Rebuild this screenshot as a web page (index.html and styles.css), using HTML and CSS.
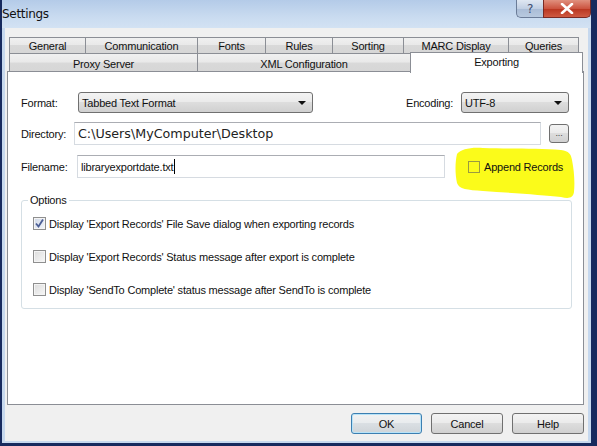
FILE: index.html
```html
<!DOCTYPE html>
<html>
<head>
<meta charset="utf-8">
<link rel="stylesheet" href="styles.css">
</head>
<body>
<div class="window">
  <div class="titlebar">
    <span class="title">Settings</span>
    <div class="caption-btns">
      <div class="cbtn help">?</div>
      <div class="cbtn close">
        <svg width="14" height="11" viewBox="0 0 14 11"><path d="M2 1 L12 10 M12 1 L2 10" stroke="#fff" stroke-width="2.6" stroke-linecap="round"/></svg>
      </div>
    </div>
  </div>
  <div class="client">
    <div class="tabs">
      <div class="tabrow back">
        <div class="tab" style="width:77px">General</div>
        <div class="tab" style="width:113px">Communication</div>
        <div class="tab" style="width:69px">Fonts</div>
        <div class="tab" style="width:68px">Rules</div>
        <div class="tab" style="width:72px">Sorting</div>
        <div class="tab" style="width:106px">MARC Display</div>
        <div class="tab" style="width:71px">Queries</div>
      </div>
      <div class="tabrow front">
        <div class="tab" style="width:189px">Proxy Server</div>
        <div class="tab" style="width:214px">XML Configuration</div>
        <div class="tab selected" style="width:173px">Exporting</div>
      </div>
    </div>
    <div class="panel">
      <svg class="highlight" width="126" height="54" viewBox="0 0 126 54"><path d="M4 8 C8 3 18 1 30 2 C55 3 85 2 108 4 C116 5 118 8 119 14 C121 24 122 36 121 46 C120 52 116 53 108 51 C90 49 60 47 30 45 C14 44 6 43 4 37 C2 28 2 16 4 8 Z" fill="#fbfb1a"/></svg>
      <div class="row row-format">
        <span class="lbl" style="width:57px">Format:</span>
        <div class="select" style="width:235px"><span>Tabbed Text Format</span><i class="arrow"></i></div>
        <span class="lbl enc">Encoding:</span>
        <div class="select" style="width:108px"><span>UTF-8</span><i class="arrow"></i></div>
      </div>
      <div class="row row-dir">
        <span class="lbl" style="width:53px">Directory:</span>
        <div class="input dir" style="width:468px">C:\Users\MyComputer\Desktop</div>
        <div class="btn dots">...</div>
      </div>
      <div class="row row-file">
        <span class="lbl" style="width:56px">Filename:</span>
        <div class="input file" style="width:368px">libraryexportdate.txt<span class="caret"></span></div>
        <label class="check append"><span class="box"></span>Append Records</label>
      </div>
      <fieldset class="options">
        <legend>Options</legend>
        <label class="check"><span class="box checked"><svg width="11" height="11" viewBox="0 0 11 11"><path d="M2 5.5 L4.5 8.5 L9 1.5" fill="none" stroke="#4b5e95" stroke-width="1.8"/></svg></span>Display 'Export Records' File Save dialog when exporting records</label>
        <label class="check"><span class="box"></span>Display 'Export Records' Status message after export is complete</label>
        <label class="check"><span class="box"></span>Display 'SendTo Complete' status message after SendTo is complete</label>
      </fieldset>
    </div>
    <div class="buttons">
      <div class="btn default">OK</div>
      <div class="btn">Cancel</div>
      <div class="btn">Help</div>
    </div>
  </div>
</div>
</body>
</html>
```
FILE: styles.css
```css
* { box-sizing: border-box; }
html, body { margin: 0; padding: 0; background: #172a5e; }
body {
  font-family: "Liberation Sans", Arial, sans-serif;
  font-size: 11px;
  letter-spacing: -0.2px;
  color: #111;
}
.window {
  width: 597px;
  height: 446px;
  background: #c6d8ee;
  border-style: solid;
  border-color: #172a5e;
  border-width: 0 6px 3px 2px;
  display: flex;
  flex-direction: column;
}
.titlebar {
  height: 28px;
  flex: none;
  display: flex;
  align-items: flex-start;
  justify-content: space-between;
  background: linear-gradient(#b4cbe8, #c9dbf0 60%, #d3e2f3);
}
.title {
  font-family: "DejaVu Sans", sans-serif;
  font-size: 12px;
  letter-spacing: -0.3px;
  color: #111;
  margin: 7px 0 0 0;
}
.caption-btns { display: flex; margin-right: 0; }
.cbtn {
  height: 18px;
  display: flex;
  align-items: center;
  justify-content: center;
  border: 1px solid #6b7c98;
  border-top: none;
}
.help {
  width: 27px;
  border-radius: 0 0 0 5px;
  border-right: none;
  background: linear-gradient(#dfe7f2, #c1cfe3 50%, #a9bcd6 51%, #b8c9df);
  font-family: "DejaVu Sans", sans-serif;
  font-size: 12px;
  color: #3c4d6e;
}
.close {
  width: 48px;
  border-radius: 0 0 5px 0;
  border-color: #7a2a24;
  background: linear-gradient(#e0907e, #cc5440 50%, #b8341f 51%, #cf5a42);
}
.client {
  flex: 1;
  margin: 0 3px 2px 3px;
  background: #f0f0f0;
  display: flex;
  flex-direction: column;
  padding: 9px 0 0 0;
}
.tabs { margin-left: 4px; }
.tabrow { display: flex; }
.tab {
  height: 17px;
  border: 1px solid #8b8e95;
  border-bottom: none;
  margin-right: -1px;
  background: linear-gradient(#f0f0f0, #e9e9e9 45%, #d9d9d9 50%, #d6d6d6);
  display: flex;
  align-items: center;
  justify-content: center;
  padding-top: 1px;
}
.back .tab { height: 16px; }
.front { height: 18px; }
.front .tab { height: 19px; }
.tab.selected {
  position: relative;
  z-index: 2;
  margin-top: -1px;
  height: 21px;
  background: #fff;
  align-items: flex-start;
  padding-top: 3px;
  border-color: #8b8e95;
}
.panel {
  position: relative;
  margin-left: 2px;
  width: 577px;
  height: 334px;
  background: #fff;
  border: 1px solid #8b8e95;
  padding: 20px 14px 0 13px;
}
.highlight { position: absolute; left: 445px; top: 74px; }
.row { display: flex; align-items: center; position: relative; }
.row-format { height: 21px; }
.row-dir { height: 23px; margin-top: 9px; }
.row-file { height: 23px; margin-top: 10px; }
.lbl { flex: none; }
.enc { margin-left: auto; width: 55px; }
.select {
  height: 21px;
  border: 1px solid #707070;
  border-radius: 3px;
  background: linear-gradient(#f3f3f3, #ebebeb 45%, #dddddd 50%, #d0d0d0);
  display: flex;
  align-items: center;
  padding-left: 3px;
}
.select span { flex: 1; }
.arrow {
  width: 0; height: 0;
  border-left: 4px solid transparent;
  border-right: 4px solid transparent;
  border-top: 4px solid #111;
  margin-right: 6px;
}
.input {
  height: 23px;
  border: 1px solid #d6dbe1;
  border-top-color: #abadb3;
  background: #fff;
  display: flex;
  align-items: center;
  padding-left: 3px;
}
.input.dir {
  font-family: "DejaVu Sans", sans-serif;
  font-size: 12.7px;
  letter-spacing: 0;
  color: #222;
}
.caret { width: 1px; height: 15px; background: #000; margin-left: 1px; }
.btn {
  border: 1px solid #707070;
  border-radius: 3px;
  background: linear-gradient(#f3f3f3, #ebebeb 45%, #dddddd 50%, #d0d0d0);
  display: flex;
  align-items: center;
  justify-content: center;
}
.dots {
  width: 20px;
  height: 19px;
  margin-left: 8px;
  font-size: 9px;
  color: #444;
  padding-bottom: 2px;
}
.check { display: flex; align-items: center; }
.box {
  width: 13px;
  height: 13px;
  border: 1px solid #8f8f8f;
  background: linear-gradient(135deg, #dcdcdc, #f7f7f7);
  box-shadow: inset 0 0 0 1px #f4f4f4;
  margin-right: 3px;
  display: flex;
  align-items: center;
  justify-content: center;
  flex: none;
}
.box.checked { background: linear-gradient(135deg, #cfd7e6, #f4f6fb); }
.append {
  position: relative;
  z-index: 1;
  margin-left: 23px;
  margin-top: 1px;
}
.append .box { width: 12px; height: 12px; background: transparent; border-color: #9a9a40; box-shadow: none; margin-right: 4px; }
.options {
  margin: 16px 0 0 0;
  width: 551px;
  height: 115px;
  border: 1px solid #d5dfe5;
  border-radius: 3px;
  padding: 0 0 0 11px;
  display: flex;
  flex-direction: column;
  gap: 20px;
}
.options legend { padding: 0 2px; margin-left: -5px; }
.options .check { height: 13px; }
.options .check:first-of-type { margin-top: 11px; }
.buttons {
  display: flex;
  justify-content: flex-end;
  gap: 9px;
  margin: 8px 4px 0 0;
}
.buttons .btn { width: 72px; height: 21px; }
.buttons .btn.default {
  width: 71px;
  border-color: #3c7fb1;
  box-shadow: inset 0 0 0 1px #b8e3f8;
  background: linear-gradient(#f2f2f2, #e9ecee 45%, #dadfe3 50%, #cfd4d8);
}
```
